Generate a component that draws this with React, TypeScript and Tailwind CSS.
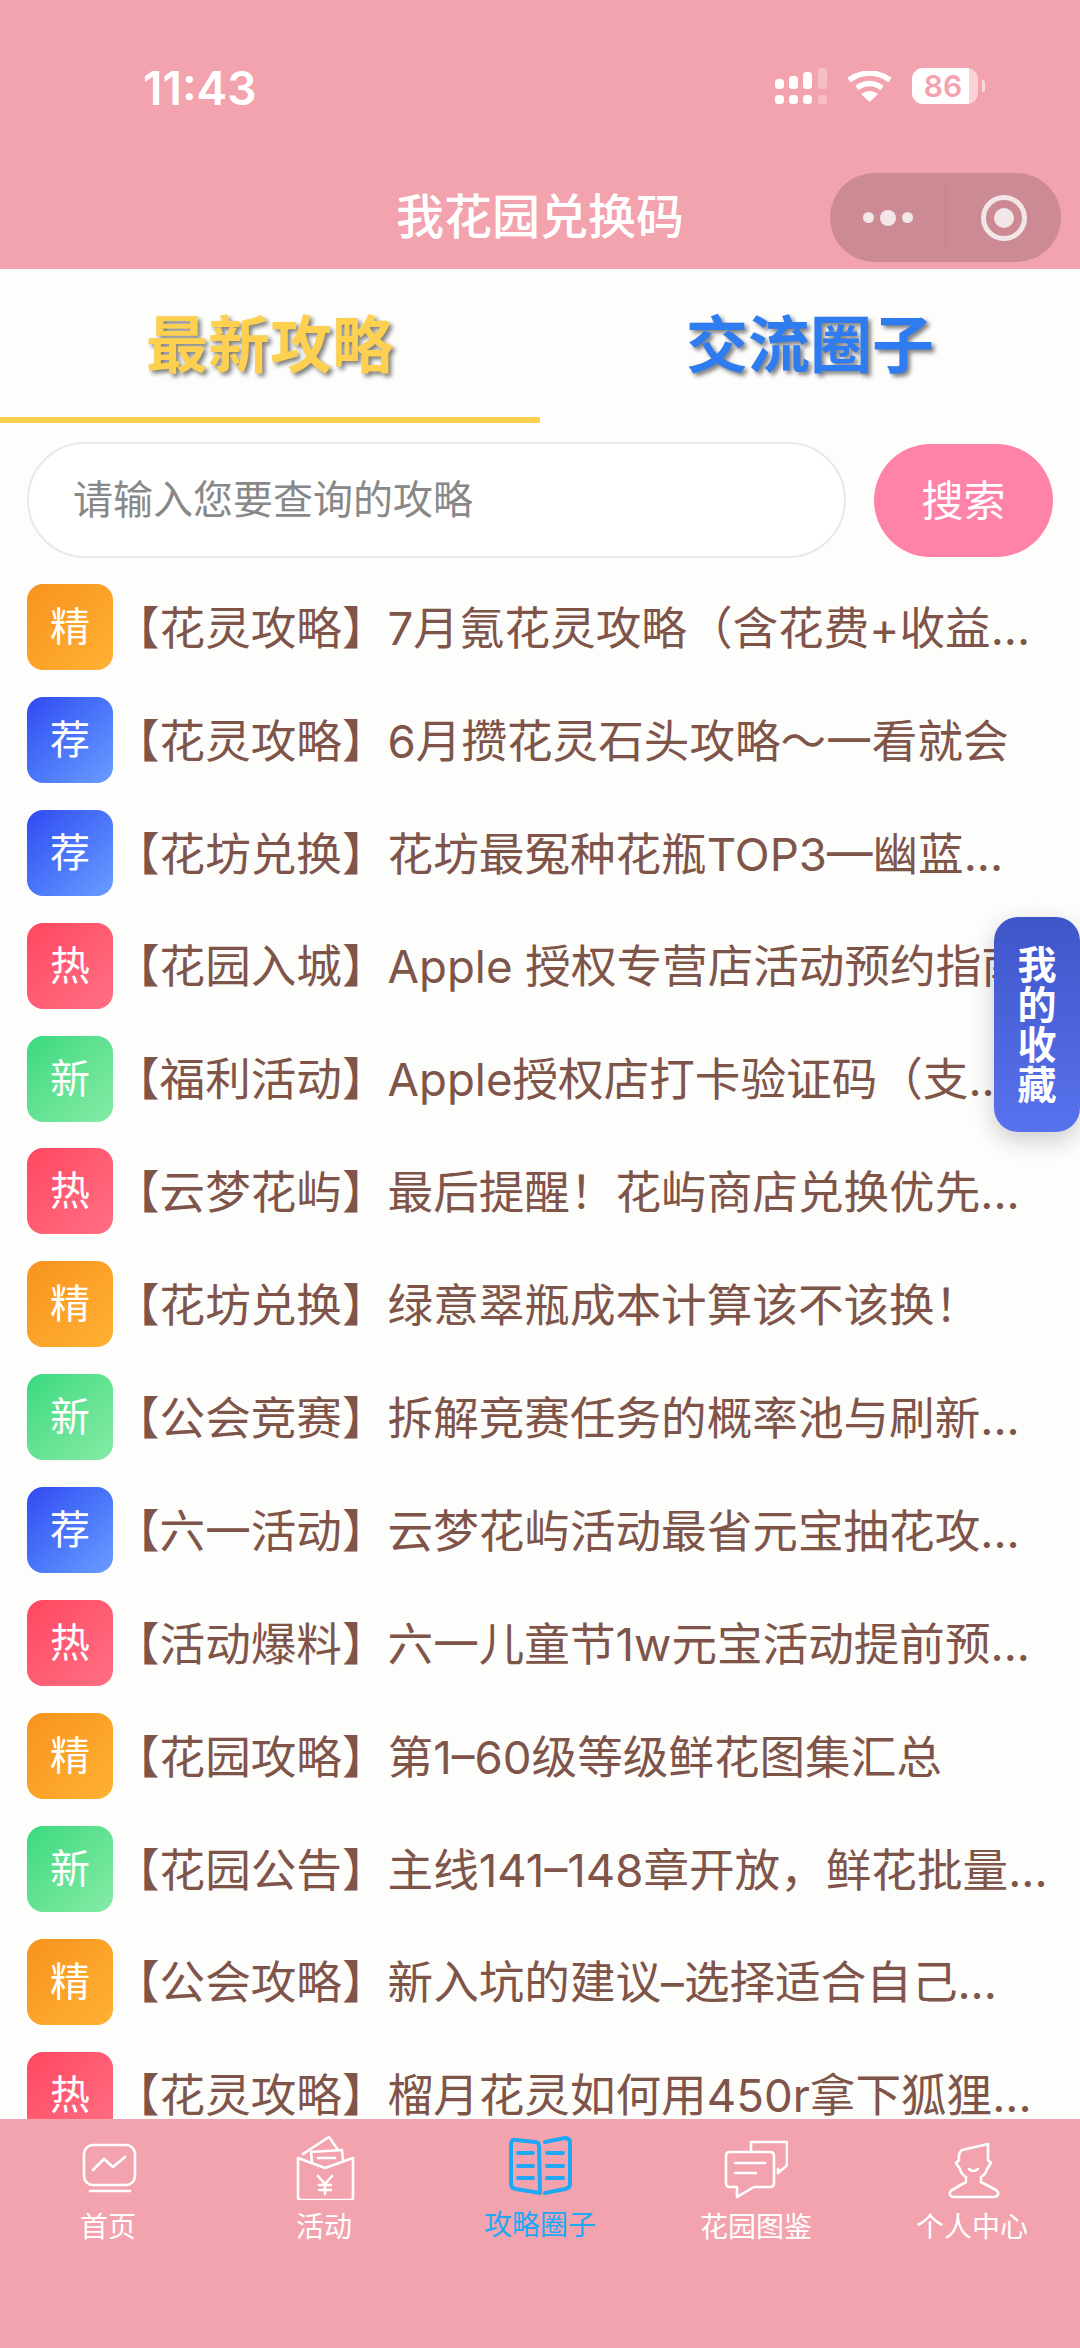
import React from 'react';

const FONT = "font-['Inter','Noto_Sans_CJK_SC',sans-serif]";

type Tag = 'jing' | 'jian' | 're' | 'xin';

const tagStyle: Record<Tag, { label: string; className: string }> = {
  jing: { label: '精', className: 'from-[#f7931e] to-[#ffb133]' },
  jian: { label: '荐', className: 'from-[#3347f2] to-[#6a9cff]' },
  re: { label: '热', className: 'from-[#ff4660] to-[#ff6f85]' },
  xin: { label: '新', className: 'from-[#36d97f] to-[#84eba6]' },
};

const articles: { tag: Tag; title: string }[] = [
  { tag: 'jing', title: '【花灵攻略】7月氪花灵攻略（含花费+收益...' },
  { tag: 'jian', title: '【花灵攻略】6月攒花灵石头攻略～一看就会' },
  { tag: 'jian', title: '【花坊兑换】花坊最冤种花瓶TOP3—幽蓝...' },
  { tag: 're', title: '【花园入城】Apple 授权专营店活动预约指南' },
  { tag: 'xin', title: '【福利活动】Apple授权店打卡验证码（支...' },
  { tag: 're', title: '【云梦花屿】最后提醒！花屿商店兑换优先...' },
  { tag: 'jing', title: '【花坊兑换】绿意翠瓶成本计算该不该换！' },
  { tag: 'xin', title: '【公会竞赛】拆解竞赛任务的概率池与刷新...' },
  { tag: 'jian', title: '【六一活动】云梦花屿活动最省元宝抽花攻...' },
  { tag: 're', title: '【活动爆料】六一儿童节1w元宝活动提前预...' },
  { tag: 'jing', title: '【花园攻略】第1–60级等级鲜花图集汇总' },
  { tag: 'xin', title: '【花园公告】主线141–148章开放，鲜花批量...' },
  { tag: 'jing', title: '【公会攻略】新入坑的建议–选择适合自己...' },
  { tag: 're', title: '【花灵攻略】榴月花灵如何用450r拿下狐狸...' },
];

const HomeIcon = () => (
  <svg width="64" height="64" viewBox="0 0 64 64" fill="none" stroke="currentColor" strokeWidth="2.6" strokeLinecap="round" strokeLinejoin="round">
    <rect x="8" y="9" width="51" height="40" rx="9" />
    <path d="M17 34 L28 23 L37 31 L49 21" />
    <path d="M14 55 H54" />
  </svg>
);

const ActivityIcon = () => (
  <svg width="64" height="64" viewBox="0 0 64 64" fill="none" stroke="currentColor" strokeWidth="2.6" strokeLinecap="round" strokeLinejoin="round">
    <path d="M6 22 V61 Q6 64 9 64 H58 Q61 64 61 61 V22 L33 32 Z" />
    <path d="M11 18 L37 1 L46 14" />
    <path d="M20 26 L19 16 L50 14 L51 24" />
    <path d="M26 22 H43" />
    <path d="M26 40 L33 48 L40 40 M33 48 V58 M27 49 H39 M27 54 H39" />
  </svg>
);

const BookIcon = () => (
  <svg width="64" height="64" viewBox="0 0 64 64" fill="none" stroke="currentColor" strokeWidth="4" strokeLinecap="round" strokeLinejoin="round">
    <path d="M3 8 Q3 3 8 4 L27 6 Q31 6 31 10 L32 57 L8 53 Q3 52 3 48 Z" />
    <path d="M37 6 L57 2 Q62 2 62 7 V48 Q62 52 57 53 L37 57" />
    <path d="M10 17 H25 M10 30 H25 M10 42 H25 M39 17 H55 M39 30 H55 M39 42 H55" />
  </svg>
);

const ChatIcon = () => (
  <svg width="64" height="64" viewBox="0 0 64 64" fill="none" stroke="currentColor" strokeWidth="2.6" strokeLinecap="round" strokeLinejoin="round">
    <path d="M6 16 H46 Q50 16 50 20 V47 Q50 51 46 51 H30 L13 61 V51 H6 Q2 51 2 47 V20 Q2 16 6 16 Z" />
    <path d="M27 14 V6 H63 V28 Q63 30 60 32 L54 37 V33" />
    <path d="M11 27 H41 M11 37 H32" />
  </svg>
);

const PersonIcon = () => (
  <svg width="64" height="64" viewBox="0 0 64 64" fill="none" stroke="currentColor" strokeWidth="2.6" strokeLinecap="round" strokeLinejoin="round">
    <path d="M22 14 L48 8 V24 L51 27 L47 33 Q46 38 41 41 V46 L56 54 Q60 57 57 60 Q56 61 54 61 H14 Q12 61 11 60 Q8 57 12 54 L26 46 V41 Q21 38 20 33 L16 27 L19 24 Q18 17 22 14 Z" />
    <path d="M29 33 Q33 37 38 33" />
  </svg>
);

const navItems = [
  { label: '首页', icon: <HomeIcon /> },
  { label: '活动', icon: <ActivityIcon /> },
  { label: '攻略圈子', icon: <BookIcon />, active: true },
  { label: '花园图鉴', icon: <ChatIcon /> },
  { label: '个人中心', icon: <PersonIcon /> },
];

const StatusBar = () => (
  <div className="flex h-[146px] items-start justify-between pt-[62px] pr-[95px] pl-[143px]">
    <span className="text-[46px] leading-[52px] font-semibold text-white">11:43</span>
    <div className="mt-[6px] flex h-[36px] items-center gap-[20px]">
      <svg width="52" height="36" viewBox="0 0 52 36" fill="white">
        <rect x="0" y="11" width="9" height="10" rx="3.5" />
        <rect x="14" y="8" width="9" height="13" rx="3.5" />
        <rect x="28" y="4" width="9" height="17" rx="3.5" />
        <rect x="43" y="0" width="9" height="21" rx="3.5" opacity="0.3" />
        <rect x="0" y="27" width="9" height="9" rx="3.5" />
        <rect x="14" y="27" width="9" height="9" rx="3.5" />
        <rect x="28" y="27" width="9" height="9" rx="3.5" />
        <rect x="43" y="27" width="9" height="9" rx="3.5" opacity="0.3" />
      </svg>
      <svg width="45" height="31" viewBox="0 0 45 31" fill="none" stroke="white" strokeWidth="5.5">
        <path d="M2 9 Q22.5 -5 43 9" />
        <path d="M10 17 Q22.5 8 35 17" />
        <path d="M22.5 31 L14 23 Q22.5 17 31 23 Z" fill="white" stroke="none" />
      </svg>
      <div className="flex items-center gap-[4px]">
        <div className="flex h-[36px] w-[66px] items-center justify-center rounded-[11px] bg-[linear-gradient(90deg,#ffffff_86%,rgba(255,255,255,0.5)_86%)] pr-[4px] text-[30px] leading-none font-semibold text-[#f4a3ae]">
          86
        </div>
        <div className="h-[12px] w-[3px] rounded-r-full bg-white/60" />
      </div>
    </div>
  </div>
);

const Capsule = () => (
  <div className="absolute top-[27px] right-[19px] flex h-[89px] w-[231px] items-center rounded-full bg-[#cc8a94]">
    <div className="flex w-[115px] items-center justify-center gap-[6px]">
      <span className="h-[11px] w-[11px] rounded-full bg-[#f2e6e8]" />
      <span className="h-[16px] w-[16px] rounded-full bg-[#f2e6e8]" />
      <span className="h-[11px] w-[11px] rounded-full bg-[#f2e6e8]" />
    </div>
    <div className="h-[70px] w-px bg-[#c48490]" />
    <div className="flex flex-1 items-center justify-center">
      <div className="flex h-[46px] w-[46px] items-center justify-center rounded-full border-[5px] border-[#f2e6e8]">
        <span className="h-[20px] w-[20px] rounded-full bg-[#f2e6e8]" />
      </div>
    </div>
  </div>
);

export default function App() {
  return (
    <div className={`relative flex h-[2348px] w-[1080px] flex-col overflow-hidden bg-[#fdfdfc] ${FONT}`}>
      <header className="shrink-0 bg-[#f3a3ae]">
        <StatusBar />
        <div className="relative flex h-[123px] items-start justify-center pt-[41px]">
          <span className="text-[48px] leading-[60px] font-medium text-white">我花园兑换码</span>
          <Capsule />
        </div>
      </header>

      <main className="flex min-h-0 flex-1 flex-col">
        <div className="flex h-[154px] shrink-0">
          <div className="flex h-full flex-1 items-start justify-center border-b-[6px] border-[#fdd04f] pt-[38px]">
            <span className="text-[62px] leading-[78px] font-bold text-[#fdd04f] [text-shadow:3px_3px_4px_rgba(0,0,0,0.5)]">最新攻略</span>
          </div>
          <div className="flex h-full flex-1 items-start justify-center pt-[38px]">
            <span className="text-[62px] leading-[78px] font-bold text-[#2f7bf0] [text-shadow:3px_3px_4px_rgba(0,0,0,0.5)]">交流圈子</span>
          </div>
        </div>

        <div className="flex shrink-0 items-center gap-[28px] pt-[19px] pr-[27px] pl-[27px]">
          <div className="flex h-[116px] flex-1 items-center rounded-full border-2 border-[#e8e8e8] bg-white pl-[44px] text-[40px] text-[#888888]">
            请输入您要查询的攻略
          </div>
          <button className="h-[113px] w-[179px] rounded-full bg-[#ff82a9] text-[42px] text-white">搜索</button>
        </div>

        <ul className="mt-[26px] flex min-h-0 flex-1 flex-col gap-[26.9px] overflow-hidden pr-[27px] pl-[27px]">
          {articles.map((a, i) => (
            <li key={i} className="flex h-[86px] shrink-0 items-center gap-[1px]">
              <span className={`flex h-[86px] w-[86px] shrink-0 items-center justify-center rounded-[16px] bg-gradient-to-br text-[40px] text-white ${tagStyle[a.tag].className}`}>
                {tagStyle[a.tag].label}
              </span>
              <span className="min-w-0 flex-1 overflow-hidden pt-[4px] text-[45.6px] whitespace-nowrap text-[#7f5449]">{a.title}</span>
            </li>
          ))}
        </ul>
      </main>

      <nav className="flex h-[229px] shrink-0 items-start bg-[#f3a3ae] pt-[17px]">
        {navItems.map((item) => (
          <div key={item.label} className={`flex flex-1 flex-col items-center ${item.active ? 'text-[#1ea8f5]' : 'text-white'}`}>
            {item.icon}
            <span className={`text-[28px] leading-[36px] ${item.active ? 'mt-[7px]' : 'mt-[9px]'}`}>{item.label}</span>
          </div>
        ))}
      </nav>

      <button className="absolute top-[917px] right-0 flex h-[215px] w-[86px] items-center justify-center rounded-[24px] bg-gradient-to-b from-[#3f56c8] to-[#5872ee] text-[39px] leading-[40px] font-semibold text-white shadow-[0_8px_24px_rgba(0,0,0,0.2)]">
        <span className="w-[40px] text-center">我的收藏</span>
      </button>
    </div>
  );
}
